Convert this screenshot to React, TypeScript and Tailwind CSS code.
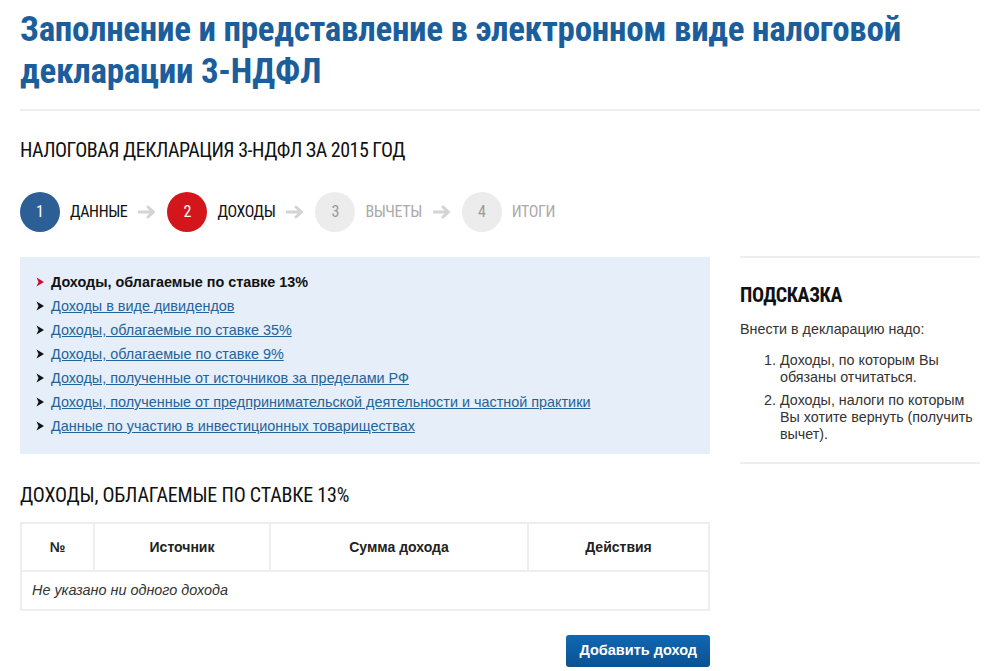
import React from 'react';

const narrow = { fontFamily: '"Roboto Condensed", "Liberation Sans Narrow", "DejaVu Sans Condensed", sans-serif', fontStretch: 'condensed' } as const;

const steps = [
  { n: 1, label: 'ДАННЫЕ', circle: 'bg-[#2c5f95] text-white', text: 'text-[#111]' },
  { n: 2, label: 'ДОХОДЫ', circle: 'bg-[#d3161c] text-white', text: 'text-[#111]' },
  { n: 3, label: 'ВЫЧЕТЫ', circle: 'bg-[#ececec] text-[#999]', text: 'text-[#aaa]' },
  { n: 4, label: 'ИТОГИ', circle: 'bg-[#ececec] text-[#999]', text: 'text-[#aaa]' },
];

const links = [
  'Доходы в виде дивидендов',
  'Доходы, облагаемые по ставке 35%',
  'Доходы, облагаемые по ставке 9%',
  'Доходы, полученные от источников за пределами РФ',
  'Доходы, полученные от предпринимательской деятельности и частной практики',
  'Данные по участию в инвестиционных товариществах',
];

const Chevron: React.FC<{ color: string }> = ({ color }) => (
  <svg width="10" height="10" viewBox="0 0 10 10" className="shrink-0">
    <path d="M1.5 0.5 L9 5 L1.5 9.5 L3.5 5 Z" fill={color} />
  </svg>
);

const StepArrow = () => (
  <svg width="18" height="14" viewBox="0 0 18 14" className="mx-[11px]">
    <path d="M1 7 H15 M10 2 L15.5 7 L10 12" stroke="#d4d4d4" strokeWidth="3" fill="none" strokeLinecap="round" strokeLinejoin="round" />
  </svg>
);

export default function App() {
  return (
    <div className="min-h-[671px] bg-white pl-5 pr-1 pt-[9px] text-[#333]" style={{ fontFamily: '"Liberation Sans", Arial, sans-serif' }}>
      <h1 className="whitespace-nowrap text-[35px] font-bold leading-[42px] tracking-[-0.28px] text-[#1b5e9b]" style={narrow}>
        Заполнение и представление в электронном виде налоговой<br />декларации 3-НДФЛ
      </h1>
      <div className="mt-[16px] h-[2px] bg-[#eeeeee]" />

      <h2 className="mt-[26px] text-[20px] leading-[26px] tracking-[-0.5px] text-[#111]" style={narrow}>НАЛОГОВАЯ ДЕКЛАРАЦИЯ 3-НДФЛ ЗА 2015 ГОД</h2>

      <div className="mt-[29px] flex items-center">
        {steps.map((s, i) => (
          <React.Fragment key={s.n}>
            {i > 0 && <StepArrow />}
            <div className={`flex h-[40px] w-[40px] items-center justify-center rounded-full text-[16px] ${s.circle}`} style={narrow}>{s.n}</div>
            <span className={`ml-[10px] text-[16px] tracking-[-0.4px] ${s.text}`} style={narrow}>{s.label}</span>
          </React.Fragment>
        ))}
      </div>

      <div className="mt-[25px] flex items-start gap-[30px]">
        <div className="w-[690px] shrink-0">
          <div className="h-[197px] bg-[#e6eef9] px-[15px] pt-[13px]">
            <ul className="text-[14.4px] leading-[24px]">
              <li className="flex items-center gap-[6px] font-bold text-[#111]">
                <Chevron color="#c8102e" />
                Доходы, облагаемые по ставке 13%
              </li>
              {links.map((l) => (
                <li key={l} className="flex items-center gap-[6px]">
                  <Chevron color="#111" />
                  <a href="#" className="text-[#24639a] underline">{l}</a>
                </li>
              ))}
            </ul>
          </div>

          <h2 className="mt-[27px] text-[20px] leading-[28px] tracking-[-0.2px] text-[#111]" style={narrow}>ДОХОДЫ, ОБЛАГАЕМЫЕ ПО СТАВКЕ 13%</h2>

          <table className="mt-[13px] w-full border-collapse border-2 border-[#eeeeee] text-[14px]">
            <thead>
              <tr className="h-[48px] font-bold text-[#222]">
                <th className="w-[73px] border-2 border-[#eeeeee]">№</th>
                <th className="w-[176px] border-2 border-[#eeeeee]">Источник</th>
                <th className="w-[258px] border-2 border-[#eeeeee]">Сумма дохода</th>
                <th className="border-2 border-[#eeeeee]">Действия</th>
              </tr>
            </thead>
            <tbody>
              <tr className="h-[39px]">
                <td colSpan={4} className="px-[10px] text-[14.4px] italic text-[#333]">Не указано ни одного дохода</td>
              </tr>
            </tbody>
          </table>

          <div className="mt-[24px] flex justify-end">
            <button className="h-[32px] rounded-[3px] bg-gradient-to-b from-[#1068b3] to-[#0a5293] px-[13px] text-[14.5px] font-bold text-white">Добавить доход</button>
          </div>
        </div>

        <aside className="-mt-px flex-1 border-y-2 border-[#eeeeee] pb-[19px] pt-[24px]">
          <h3 className="text-[20px] font-bold leading-[26px] tracking-[-0.4px] text-[#111]" style={narrow}>ПОДСКАЗКА</h3>
          <p className="mt-[13px] text-[14.3px] leading-[17px]">Внести в декларацию надо:</p>
          <ol className="mt-[14px] list-decimal pl-[40px] text-[14.3px] leading-[17px]">
            <li>Доходы, по которым Вы обязаны отчитаться.</li>
            <li className="mt-[6px]">Доходы, налоги по которым Вы хотите вернуть (получить вычет).</li>
          </ol>
        </aside>
      </div>
    </div>
  );
}
